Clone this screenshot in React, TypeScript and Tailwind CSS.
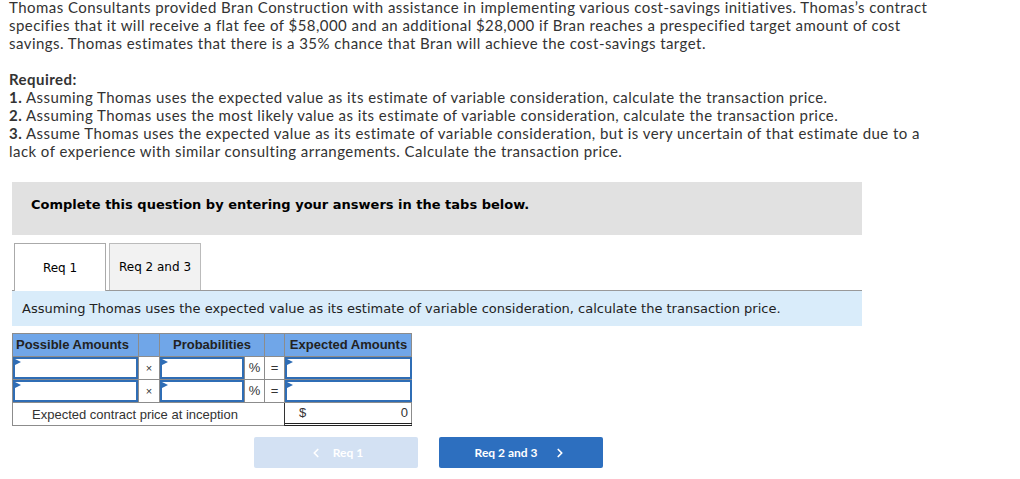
import { ChevronLeft, ChevronRight } from "lucide-react";

const body = "font-['Lato','Noto_Sans',sans-serif]";
const verdana = "font-['DejaVu_Sans','Verdana',sans-serif]";
const arial = "font-['Liberation_Sans','Arial',sans-serif]";

function Field() {
  return (
    <div className="relative h-full w-full border-2 border-[#2f6db5] bg-white">
      <span className="absolute left-0 top-0 h-0 w-0 border-l-[6px] border-t-[3px] border-b-[3px] border-l-[#2f6db5] border-t-transparent border-b-transparent" />
    </div>
  );
}

function Row() {
  return (
    <div className="grid h-[23px] grid-cols-[126px_21px_84px_21px_20px_127px] border-b border-[#8c8c8c] text-[11px] text-[#333]">
      <div className="border-r border-[#8c8c8c] p-0">
        <Field />
      </div>
      <div className="flex items-center justify-center border-r border-[#8c8c8c]">×</div>
      <div>
        <Field />
      </div>
      <div className="flex items-center justify-center border-x border-[#8c8c8c] text-[13px]">%</div>
      <div className="flex items-center justify-center border-r border-[#8c8c8c] text-[13px]">=</div>
      <div>
        <Field />
      </div>
    </div>
  );
}

export default function App() {
  return (
    <div className="w-[1020px] bg-white pb-3 text-[#333]">
      <div className={`${body} pl-[9px] pr-[80px] text-[15px] leading-[18px] tracking-[0.45px] text-[#333]`}>
        <p className="-mt-[2px]">
          Thomas Consultants provided Bran Construction with assistance in implementing various cost-savings initiatives. Thomas’s contract specifies that it will receive a flat fee of $58,000 and an additional $28,000 if Bran reaches a prespecified target amount of cost savings. Thomas estimates that there is a 35% chance that Bran will achieve the cost-savings target.
        </p>
        <p className="mt-[18px] font-bold">Required:</p>
        <p>
          <b>1.</b> Assuming Thomas uses the expected value as its estimate of variable consideration, calculate the transaction price.
        </p>
        <p>
          <b>2.</b> Assuming Thomas uses the most likely value as its estimate of variable consideration, calculate the transaction price.
        </p>
        <p>
          <b>3.</b> Assume Thomas uses the expected value as its estimate of variable consideration, but is very uncertain of that estimate due to a lack of experience with similar consulting arrangements. Calculate the transaction price.
        </p>
      </div>

      <div className={`${verdana} ml-[12px] mt-[22px] w-[850px]`}>
        <div className="flex h-[53px] items-start bg-[#e1e1e1] pl-[19px] pt-[13px] text-[13px] font-bold text-black">
          Complete this question by entering your answers in the tabs below.
        </div>

        <div className="mt-[8px] flex gap-[3px] pl-[2px] text-[12px] text-black">
          <div className="-mb-px flex h-[48px] w-[92px] items-center justify-center border border-b-0 border-[#aaa] bg-white">
            Req 1
          </div>
          <div className="flex h-[47px] w-[92px] items-center justify-center border border-b-0 border-[#bbb] bg-[#f2f2f2]">
            Req 2 and 3
          </div>
        </div>

        <div className="flex h-[36px] items-center border-t border-[#999] bg-[#d9ecfa] pl-[10px] text-[13px] text-[#222]">
          Assuming Thomas uses the expected value as its estimate of variable consideration, calculate the transaction price.
        </div>
      </div>

      <div className={`${arial} ml-[12px] mt-[7px] w-[400px] border-l border-t border-r border-[#8c8c8c]`}>
        <div className="grid h-[23px] grid-cols-[126px_21px_105px_20px_127px] border-b border-[#8c8c8c] bg-[#70a6e8] text-[13px] font-bold text-[#222]">
          <div className="flex items-center border-r border-[#8c8c8c] pl-[3px]">Possible Amounts</div>
          <div className="border-r border-[#8c8c8c]" />
          <div className="flex items-center justify-center border-r border-[#8c8c8c]">Probabilities</div>
          <div className="border-r border-[#8c8c8c]" />
          <div className="flex items-center justify-center">Expected Amounts</div>
        </div>
        <Row />
        <Row />
        <div className="grid h-[23px] grid-cols-[272px_127px] border-b border-[#8c8c8c] text-[13px] text-[#333]">
          <div className="flex items-center border-r border-[#333] pl-[19px]">Expected contract price at inception</div>
          <div className="flex items-center justify-between border-b-[3px] border-double border-[#222] pl-[14px] pr-[4px]">
            <span>$</span>
            <span>0</span>
          </div>
        </div>
      </div>

      <div className={`${body} ml-[254px] mt-[11px] flex gap-[21px] text-[12px] font-bold text-white`}>
        <button className="flex h-[31px] w-[164px] items-center justify-center gap-[10px] rounded-[2px] bg-[#d3e1f3]">
          <ChevronLeft size={14} strokeWidth={3} />
          <span>Req 1</span>
        </button>
        <button className="flex h-[31px] w-[164px] items-center justify-center gap-[16px] rounded-[2px] bg-[#2d6fbf]">
          <span>Req 2 and 3</span>
          <ChevronRight size={14} strokeWidth={3} />
        </button>
      </div>
    </div>
  );
}
